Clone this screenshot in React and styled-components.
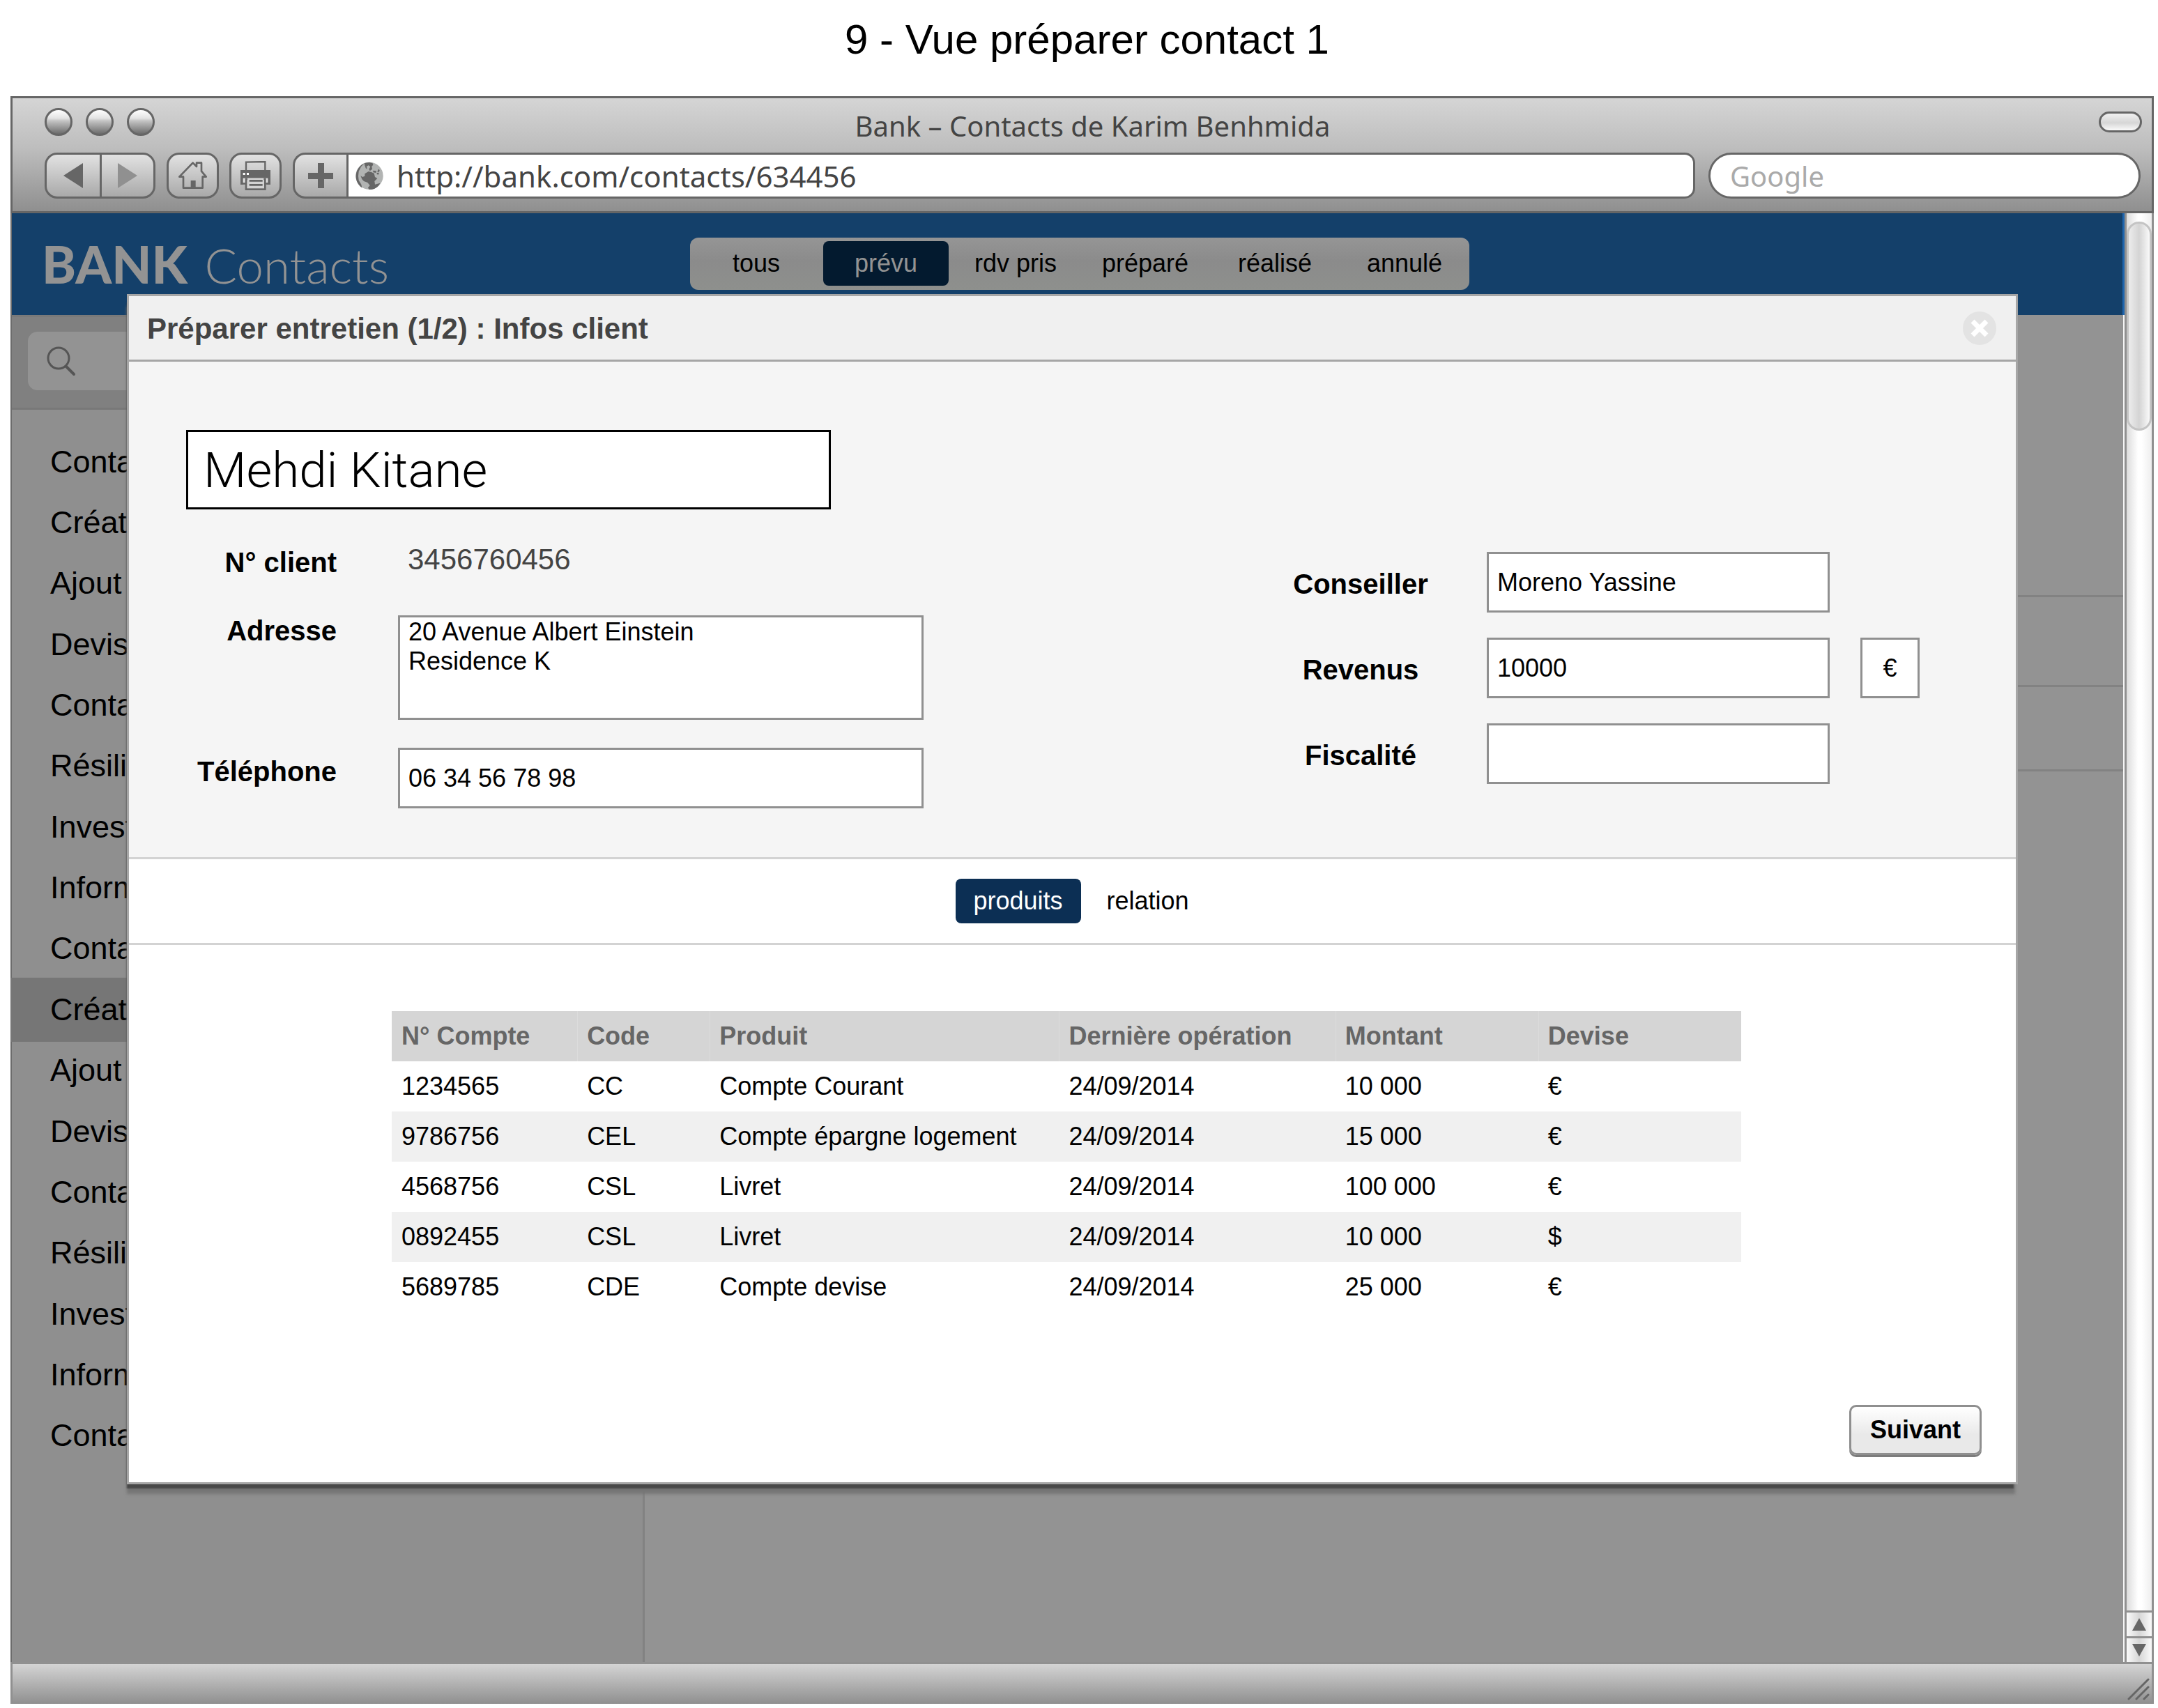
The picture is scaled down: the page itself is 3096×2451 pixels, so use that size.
import React from "react";
import styled, { createGlobalStyle, css } from "styled-components";

const GlobalStyle = createGlobalStyle`
  *, *::before, *::after { box-sizing: border-box; }
  body {
    margin: 0;
    background: #fff;
    color: #000;
    font-family: "Liberation Sans", Arial, sans-serif;
    font-size: 36px;
  }
  button, input, textarea { font: inherit; color: inherit; margin: 0; }
  ul { list-style: none; margin: 0; padding: 0; }
`;

const chrome = "#666";
const edge = "#909090";

const Page = styled.div`
  min-height: 100vh;
  display: flex;
  flex-direction: column;
  padding: 22px 6px 6px 15px;
`;

const PageTitle = styled.h1`
  margin: 0 0 46px;
  padding-left: 14px;
  text-align: center;
  font-size: 60px;
  font-weight: 400;
  line-height: 70px;
`;

const BrowserWindow = styled.section`
  flex: 1;
  display: flex;
  flex-direction: column;
`;

/* Browser chrome */

const Chrome = styled.header`
  height: 168px;
  border: 3px solid ${chrome};
  background: linear-gradient(#d5d5d5, #bdbdbd 45%, #8f8f8f);
  font-family: "Noto Sans", "Open Sans", sans-serif;
  font-size: 40px;
  color: #444;
`;

const TitleBar = styled.div`
  display: grid;
  grid-template-columns: 160px 1fr 62px;
  align-items: center;
  height: 78px;
  padding: 0 14px 0 46px;
`;

const Lights = styled.div`
  display: flex;
  gap: 19px;
  margin-bottom: 10px;
`;

const Light = styled.button`
  width: 40px;
  height: 40px;
  padding: 0;
  border: 3px solid ${chrome};
  border-radius: 50%;
  background: linear-gradient(#fff, #e2e2e2 35%, #c4c4c4 45%, #6c6c6c);
`;

const WindowTitle = styled.div`
  text-align: center;
  line-height: 50px;
  padding: 2px 100px 0 0;
`;

const Pill = styled.button`
  width: 62px;
  height: 30px;
  margin-bottom: 10px;
  padding: 0;
  border: 3px solid ${chrome};
  border-radius: 15px;
  background: linear-gradient(#f0f0f0, #d6d6d6 55%, #fafafa);
`;

const Toolbar = styled.div`
  display: flex;
  height: 66px;
  padding: 0 16px 0 46px;
`;

const ToolButton = styled.button`
  display: flex;
  align-items: center;
  justify-content: center;
  width: ${(p) => p.$width || 75}px;
  height: 66px;
  padding: 0;
  border: 3px solid ${chrome};
  border-radius: ${(p) => p.$radius || "18px"};
  background: linear-gradient(#e2e2e2, #a9a9a9);
  ${(p) => p.$joined && "border-right: 0;"}
`;

const History = styled.div`
  display: flex;
  margin-right: 16px;
`;

const Shortcuts = styled.div`
  display: flex;
  gap: 15px;
  margin-right: 16px;
`;

const AddressBar = styled.div`
  flex: 1;
  display: flex;
  margin-right: 19px;
`;

const AddressField = styled.label`
  flex: 1;
  display: flex;
  align-items: center;
  gap: 19px;
  padding-left: 10px;
  border: 3px solid ${chrome};
  border-radius: 0 15px 15px 0;
  background: #fff;
`;

const BareInput = styled.input`
  flex: 1;
  min-width: 0;
  height: 58px;
  padding: 0;
  border: 0;
  outline: 0;
  background: transparent;
  font-size: ${(p) => p.$size || 40}px;
  &::placeholder { color: #aaa; opacity: 1; }
`;

const WebSearch = styled.label`
  width: 620px;
  display: flex;
  align-items: center;
  padding: 0 28px;
  border: 3px solid ${chrome};
  border-radius: 33px;
  background: #fff;
`;

/* Viewport with its scroll bar */

const Viewport = styled.div`
  flex: 1;
  display: flex;
`;

const ContactsApp = styled.div`
  position: relative;
  flex: 1;
  display: flex;
  flex-direction: column;
  border-left: 2px solid #6c6c6c;
  background: #939393;
`;

const AppHeader = styled.header`
  display: flex;
  height: 146px;
  padding: 35px 0 0 43px;
  border-right: 3px solid #1f65ad;
  background: #14406a;
`;

const Logo = styled.div`
  width: 930px;
  font-family: Lato, sans-serif;
  font-size: 69px;
  font-weight: 300;
  line-height: 76px;
  color: #939393;
  strong {
    margin-right: 6px;
    font-size: 74px;
    font-weight: 900;
  }
`;

const StatusNav = styled.nav`
  display: grid;
  grid-template-columns: repeat(6, 186px);
  width: 1118px;
  height: 75px;
  padding: 5px 2px;
  border-radius: 12px;
  background: linear-gradient(#959595, #8b8b8b 45%, #8e908d);
`;

const Tab = styled.button`
  height: 64px;
  margin: 0 3px;
  padding: 0;
  border: 0;
  border-radius: 8px;
  background: ${(p) => (p.$active ? p.$fill : "transparent")};
  color: ${(p) => (p.$active ? p.$ink : "#000")};
`;

const AppBody = styled.div`
  flex: 1;
  display: flex;
  border-right: 2px solid #f4f4f4;
`;

const Sidebar = styled.aside`
  width: 908px;
  border-right: 3px solid #828282;
  background: #8f8f8f;
`;

const SearchZone = styled.div`
  height: 136px;
  padding: 21px 23px;
  border-top: 3px solid #7a7a7a;
  border-bottom: 3px solid #787878;
  background: #808080;
`;

const SearchBox = styled.label`
  display: flex;
  align-items: center;
  gap: 20px;
  height: 84px;
  padding-left: 27px;
  border-radius: 14px;
  background: #939393;
`;

const ContactList = styled.ul`
  display: grid;
  grid-auto-rows: 1fr;
  height: 1485px;
  margin-top: 31px;
`;

const ContactItem = styled.li`
  display: flex;
  align-items: center;
  padding-left: 55px;
  font-size: 45px;
  ${(p) =>
    p.$selected &&
    css`
      background: #767676;
      box-shadow: 0 0 0 2px #767676;
    `}
`;

const Main = styled.main`
  flex: 1;
`;

const Band = styled.div`
  height: ${(p) => p.$height}px;
  border-bottom: 3px solid #828282;
`;

const ScrollBar = styled.div`
  width: 42px;
  display: flex;
  flex-direction: column;
  border: solid ${edge};
  border-width: 0 3px;
  background: linear-gradient(90deg, #dcdcdc, #fff 45%, #fff 60%, #eee);
`;

const Track = styled.div`
  flex: 1;
  padding: 12px 0;
`;

const Thumb = styled.div`
  height: 300px;
  border: 3px solid #c4c4c4;
  border-radius: 18px;
  background: linear-gradient(90deg, #ececec, #d4d4d4 50%, #fafafa);
`;

const ScrollButton = styled.button`
  display: flex;
  align-items: center;
  justify-content: center;
  height: 37px;
  padding: 0;
  border: 0;
  border-top: 3px solid ${edge};
  background: linear-gradient(90deg, #fafafa, #d6d6d6 50%, #fafafa);
`;

const StatusBar = styled.footer`
  display: flex;
  justify-content: flex-end;
  align-items: flex-end;
  height: 60px;
  padding: 0 3px 5px;
  border: solid ${edge};
  border-width: 3px 3px 0;
  background: linear-gradient(#d4d4d4, #8f8f8f);
`;

/* Dialog */

const Overlay = styled.div`
  position: absolute;
  inset: 0;
  padding: 116px 153px 0 165px;
`;

const Dialog = styled.section`
  border: 3px solid #a6a6a6;
  background: #fff;
  box-shadow: -3px 9px 2px -3px #484848, -2px 16px 4px -2px #767676;
`;

const DialogHeader = styled.header`
  display: flex;
  align-items: center;
  justify-content: space-between;
  height: 94px;
  padding: 0 28px 0 26px;
  border-bottom: 3px solid #a6a6a6;
  background: #f0f0f0;
`;

const DialogTitle = styled.h2`
  margin: 0;
  padding-top: 2px;
  font-size: 42px;
  line-height: 48px;
  color: #444;
`;

const CloseButton = styled.button`
  display: flex;
  align-items: center;
  justify-content: center;
  width: 48px;
  height: 48px;
  padding: 0;
  border: 0;
  border-radius: 50%;
  background: #e3e3e3;
`;

const ClientInfo = styled.form`
  display: flex;
  justify-content: space-between;
  padding: 98px 138px 70px 82px;
  background: #f5f5f5;
`;

const NameInput = styled.input`
  display: block;
  width: 925px;
  height: 114px;
  margin-bottom: 50px;
  padding: 0 22px;
  border: 3px solid #000;
  border-radius: 0;
  outline: 0;
  background: #fff;
  font-family: Roboto, sans-serif;
  font-size: 71px;
  font-weight: 300;
`;

const Identity = styled.div`
  display: grid;
  grid-template-columns: 216px 754px;
  grid-template-rows: 62px 150px 87px;
  column-gap: 88px;
  row-gap: 40px;
`;

const Label = styled.label`
  font-size: 40px;
  font-weight: 700;
  line-height: 44px;
  text-align: ${(p) => p.$align || "right"};
  padding-top: ${(p) => p.$top || 0}px;
`;

const ClientNumber = styled.output`
  padding-left: 14px;
  font-size: 42px;
  line-height: 44px;
  color: #444;
`;

const field = css`
  width: 100%;
  border: 3px solid ${edge};
  border-radius: 0;
  background: #fff;
  outline: 0;
`;

const Field = styled.input`
  ${field}
  height: 87px;
  padding: 0 12px;
  text-align: ${(p) => p.$align || "left"};
`;

const AddressArea = styled.textarea`
  ${field}
  height: 150px;
  padding: 0 12px;
  line-height: 42px;
  resize: none;
`;

const Finances = styled.div`
  display: flex;
  flex-direction: column;
  gap: 36px;
  margin-top: 175px;
`;

const FinanceRow = styled.div`
  display: grid;
  grid-template-columns: 242px 492px 85px;
  column-gap: 44px;
  align-items: center;
`;

const FinanceLabel = styled(Label)`
  width: 210px;
`;

const DialogTabs = styled.nav`
  display: grid;
  grid-template-columns: 186px 186px;
  justify-content: center;
  align-items: center;
  height: 126px;
  padding-left: 30px;
  border: solid #d3d3d3;
  border-width: 3px 0;
`;

const Accounts = styled.div`
  padding: 95px 394px 0 377px;
`;

const AccountTable = styled.table`
  width: 100%;
  table-layout: fixed;
  border-collapse: collapse;
  th, td {
    height: 72px;
    padding: 0 14px;
    text-align: left;
    white-space: nowrap;
  }
  th {
    background: #d5d5d5;
    color: #666;
  }
  th + th { box-shadow: inset 1px 0 #dcdcdc; }
  tbody tr:nth-child(even) { background: #f0f0f0; }
`;

const Col = styled.col`
  width: ${(p) => p.$width}px;
`;

const DialogFooter = styled.footer`
  display: flex;
  justify-content: flex-end;
  padding: 133px 49px 39px;
`;

const NextButton = styled.button`
  width: 190px;
  height: 72px;
  padding: 0;
  border: 3px solid #8f8f8f;
  border-radius: 10px;
  background: linear-gradient(#fff, #e9e9e9 60%);
  box-shadow: 0 3px #7c7c7c;
  font-weight: 700;
`;

/* Icons */

const Triangle = ({ points, w, h, fill = chrome }) => (
  <svg width={w} height={h} viewBox={`0 0 ${w} ${h}`} aria-hidden="true">
    <polygon points={points} fill={fill} />
  </svg>
);

const HomeIcon = () => (
  <svg width="41" height="40" viewBox="0 0 123 120" fill="none" stroke={chrome} strokeWidth="8" strokeLinejoin="round" aria-hidden="true">
    <path d="M62 5 L78 21 V5 H99 V41 L119 65 H104 V113 H21 V65 H4 Z" />
    <rect x="53" y="81" width="21" height="33" fill={chrome} stroke="none" />
  </svg>
);

const PrinterIcon = () => (
  <svg width="43" height="42" viewBox="0 0 129 126" aria-hidden="true">
    <path d="M24 42 V5 L106 3 V42" fill="none" stroke={chrome} strokeWidth="7" />
    <path d="M0 39 H129 V101 H113 V76 H13 V101 H0 Z" fill={chrome} />
    <rect x="11" y="74" width="107" height="20" fill="#e0e0e0" />
    <path d="M0 94 H24 V101 H0 Z M106 94 H129 V101 H106 Z" fill={chrome} />
    <rect x="24" y="78" width="82" height="44" fill="#d2d2d2" stroke={chrome} strokeWidth="8" />
    <rect x="30" y="74" width="70" height="10" fill="#d8d8d8" />
    <path d="M38 85 H95 M38 103 H95" stroke={chrome} strokeWidth="8" />
    <path d="M11 51 h9 v9 h-9z M27 51 h9 v9 h-9z" fill="#fff" />
  </svg>
);

const PlusIcon = () => (
  <svg width="36" height="36" viewBox="0 0 36 36" aria-hidden="true">
    <path d="M14 0 h9 v14 h13 v9 h-13 v13 h-9 v-13 h-14 v-9 h14z" fill={chrome} />
  </svg>
);

const GlobeIcon = () => (
  <svg width="40" height="41" viewBox="0 0 120 123" aria-hidden="true">
    <circle cx="60" cy="61" r="59" fill="#b2b4b3" />
    <path d="M38 7 C10 20 -2 50 3 74 C6 92 18 106 28 112 L25 98 L14 80 L12 62 L14 42 L24 22 Z" fill={chrome} />
    <path d="M38 6 L60 3 L74 7 L76 14 L70 20 L72 32 L62 40 L58 32 L64 22 L56 16 L48 20 L50 32 L44 28 L40 16 Z" fill={chrome} />
    <path d="M40 52 L56 42 L70 46 L80 50 L84 66 L94 72 L82 84 L84 98 L106 92 C98 110 78 122 58 120 L54 112 L62 102 L52 90 L36 84 L28 76 L22 60 L30 66 L40 62 Z" fill={chrome} />
    <path d="M76 38 L90 40 L88 48 L76 46 Z M98 32 L104 36 L102 44 L94 44 Z M92 48 L102 47 L98 56 L92 54 Z" fill={chrome} />
  </svg>
);

const SearchIcon = () => (
  <svg width="42" height="44" viewBox="0 0 42 44" fill="none" stroke="#555" strokeLinecap="round" aria-hidden="true">
    <circle cx="17" cy="18" r="15" strokeWidth="3" />
    <path d="M28 30 L39 41" strokeWidth="4" />
  </svg>
);

const CloseIcon = () => (
  <svg width="26" height="26" viewBox="0 0 26 26" stroke="#fff" strokeWidth="7" aria-hidden="true">
    <path d="M3 3 L23 23 M23 3 L3 23" />
  </svg>
);

const GripIcon = () => (
  <svg width="32" height="32" viewBox="0 0 32 32" stroke={chrome} strokeWidth="3" strokeLinecap="round" aria-hidden="true">
    <path d="M2 30 L30 2 M13 30 L30 13 M24 30 L30 24" />
  </svg>
);

/* Data */

const statuses = ["tous", "prévu", "rdv pris", "préparé", "réalisé", "annulé"];

const motifs = ["Contact", "Création", "Ajout", "Devis", "Contact", "Résiliation", "Investir", "Information"];
const contacts = [...motifs, ...motifs, "Contact"];

const columns = [
  ["N° Compte", 266],
  ["Code", 190],
  ["Produit", 501],
  ["Dernière opération", 396],
  ["Montant", 291],
  ["Devise", 291],
];

const accounts = [
  ["1234565", "CC", "Compte Courant", "24/09/2014", "10 000", "€"],
  ["9786756", "CEL", "Compte épargne logement", "24/09/2014", "15 000", "€"],
  ["4568756", "CSL", "Livret", "24/09/2014", "100 000", "€"],
  ["0892455", "CSL", "Livret", "24/09/2014", "10 000", "$"],
  ["5689785", "CDE", "Compte devise", "24/09/2014", "25 000", "€"],
];

function BrowserChrome() {
  return (
    <Chrome>
      <TitleBar>
        <Lights>
          <Light aria-label="Fermer" />
          <Light aria-label="Réduire" />
          <Light aria-label="Agrandir" />
        </Lights>
        <WindowTitle>Bank – Contacts de Karim Benhmida</WindowTitle>
        <Pill aria-label="Barre d'outils" />
      </TitleBar>
      <Toolbar>
        <History>
          <ToolButton $width={79} $radius="18px 0 0 18px" $joined aria-label="Précédent">
            <Triangle w={28} h={36} points="0,18 28,0 28,36" />
          </ToolButton>
          <ToolButton $width={80} $radius="0 18px 18px 0" aria-label="Page suivante">
            <Triangle w={28} h={36} points="28,18 0,0 0,36" fill="#909090" />
          </ToolButton>
        </History>
        <Shortcuts>
          <ToolButton aria-label="Accueil"><HomeIcon /></ToolButton>
          <ToolButton aria-label="Imprimer"><PrinterIcon /></ToolButton>
        </Shortcuts>
        <AddressBar>
          <ToolButton $width={77} $radius="18px 0 0 18px" $joined aria-label="Ajouter"><PlusIcon /></ToolButton>
          <AddressField>
            <GlobeIcon />
            <BareInput $size={42} aria-label="Adresse web" defaultValue="http://bank.com/contacts/634456" />
          </AddressField>
        </AddressBar>
        <WebSearch>
          <BareInput aria-label="Recherche web" placeholder="Google" />
        </WebSearch>
      </Toolbar>
    </Chrome>
  );
}

function FinanceFields() {
  return (
    <Finances>
      <FinanceRow>
        <FinanceLabel htmlFor="conseiller" $align="center" $top={4}>Conseiller</FinanceLabel>
        <Field id="conseiller" defaultValue="Moreno Yassine" />
      </FinanceRow>
      <FinanceRow>
        <FinanceLabel htmlFor="revenus" $align="center" $top={4}>Revenus</FinanceLabel>
        <Field id="revenus" defaultValue="10000" />
        <Field aria-label="Devise" $align="center" defaultValue="€" />
      </FinanceRow>
      <FinanceRow>
        <FinanceLabel htmlFor="fiscalite" $align="center" $top={4}>Fiscalité</FinanceLabel>
        <Field id="fiscalite" />
      </FinanceRow>
    </Finances>
  );
}

function PrepareDialog() {
  return (
    <Dialog role="dialog" aria-labelledby="dialog-title">
      <DialogHeader>
        <DialogTitle id="dialog-title">Préparer entretien (1/2) : Infos client</DialogTitle>
        <CloseButton aria-label="Fermer"><CloseIcon /></CloseButton>
      </DialogHeader>
      <ClientInfo>
        <div>
          <NameInput aria-label="Nom" defaultValue="Mehdi Kitane" />
          <Identity>
            <Label htmlFor="numero" $top={4}>N° client</Label>
            <ClientNumber id="numero">3456760456</ClientNumber>
            <Label htmlFor="adresse">Adresse</Label>
            <AddressArea id="adresse" defaultValue={"20 Avenue Albert Einstein\nResidence K"} />
            <Label htmlFor="telephone" $top={12}>Téléphone</Label>
            <Field id="telephone" defaultValue="06 34 56 78 98" />
          </Identity>
        </div>
        <FinanceFields />
      </ClientInfo>
      <DialogTabs>
        <Tab $active $fill="#0c2f54" $ink="#fff">produits</Tab>
        <Tab>relation</Tab>
      </DialogTabs>
      <Accounts>
        <AccountTable>
          <colgroup>
            {columns.map(([name, width]) => <Col key={name} $width={width} />)}
          </colgroup>
          <thead>
            <tr>{columns.map(([name]) => <th key={name} scope="col">{name}</th>)}</tr>
          </thead>
          <tbody>
            {accounts.map((row) => (
              <tr key={row[0]}>{row.map((cell, i) => <td key={i}>{cell}</td>)}</tr>
            ))}
          </tbody>
        </AccountTable>
      </Accounts>
      <DialogFooter>
        <NextButton>Suivant</NextButton>
      </DialogFooter>
    </Dialog>
  );
}

export default function App() {
  return (
    <Page>
      <GlobalStyle />
      <PageTitle>9 - Vue préparer contact 1</PageTitle>
      <BrowserWindow>
        <BrowserChrome />
        <Viewport>
          <ContactsApp>
            <AppHeader>
              <Logo><strong>BANK</strong> Contacts</Logo>
              <StatusNav>
                {statuses.map((s) => (
                  <Tab key={s} $active={s === "prévu"} $fill="#031a2f" $ink="#939393">{s}</Tab>
                ))}
              </StatusNav>
            </AppHeader>
            <AppBody>
              <Sidebar>
                <SearchZone>
                  <SearchBox>
                    <SearchIcon />
                    <BareInput aria-label="Rechercher un contact" />
                  </SearchBox>
                </SearchZone>
                <ContactList>
                  {contacts.map((name, i) => (
                    <ContactItem key={i} $selected={i === 9}>{name}</ContactItem>
                  ))}
                </ContactList>
              </Sidebar>
              <Main>
                <Band $height={405} />
                <Band $height={129} />
                <Band $height={121} />
              </Main>
            </AppBody>
            <Overlay>
              <PrepareDialog />
            </Overlay>
          </ContactsApp>
          <ScrollBar>
            <Track><Thumb /></Track>
            <ScrollButton aria-label="Défiler vers le haut">
              <Triangle w={20} h={18} points="0,18 10,0 20,18" />
            </ScrollButton>
            <ScrollButton aria-label="Défiler vers le bas">
              <Triangle w={20} h={18} points="0,0 20,0 10,18" />
            </ScrollButton>
          </ScrollBar>
        </Viewport>
        <StatusBar><GripIcon /></StatusBar>
      </BrowserWindow>
    </Page>
  );
}
